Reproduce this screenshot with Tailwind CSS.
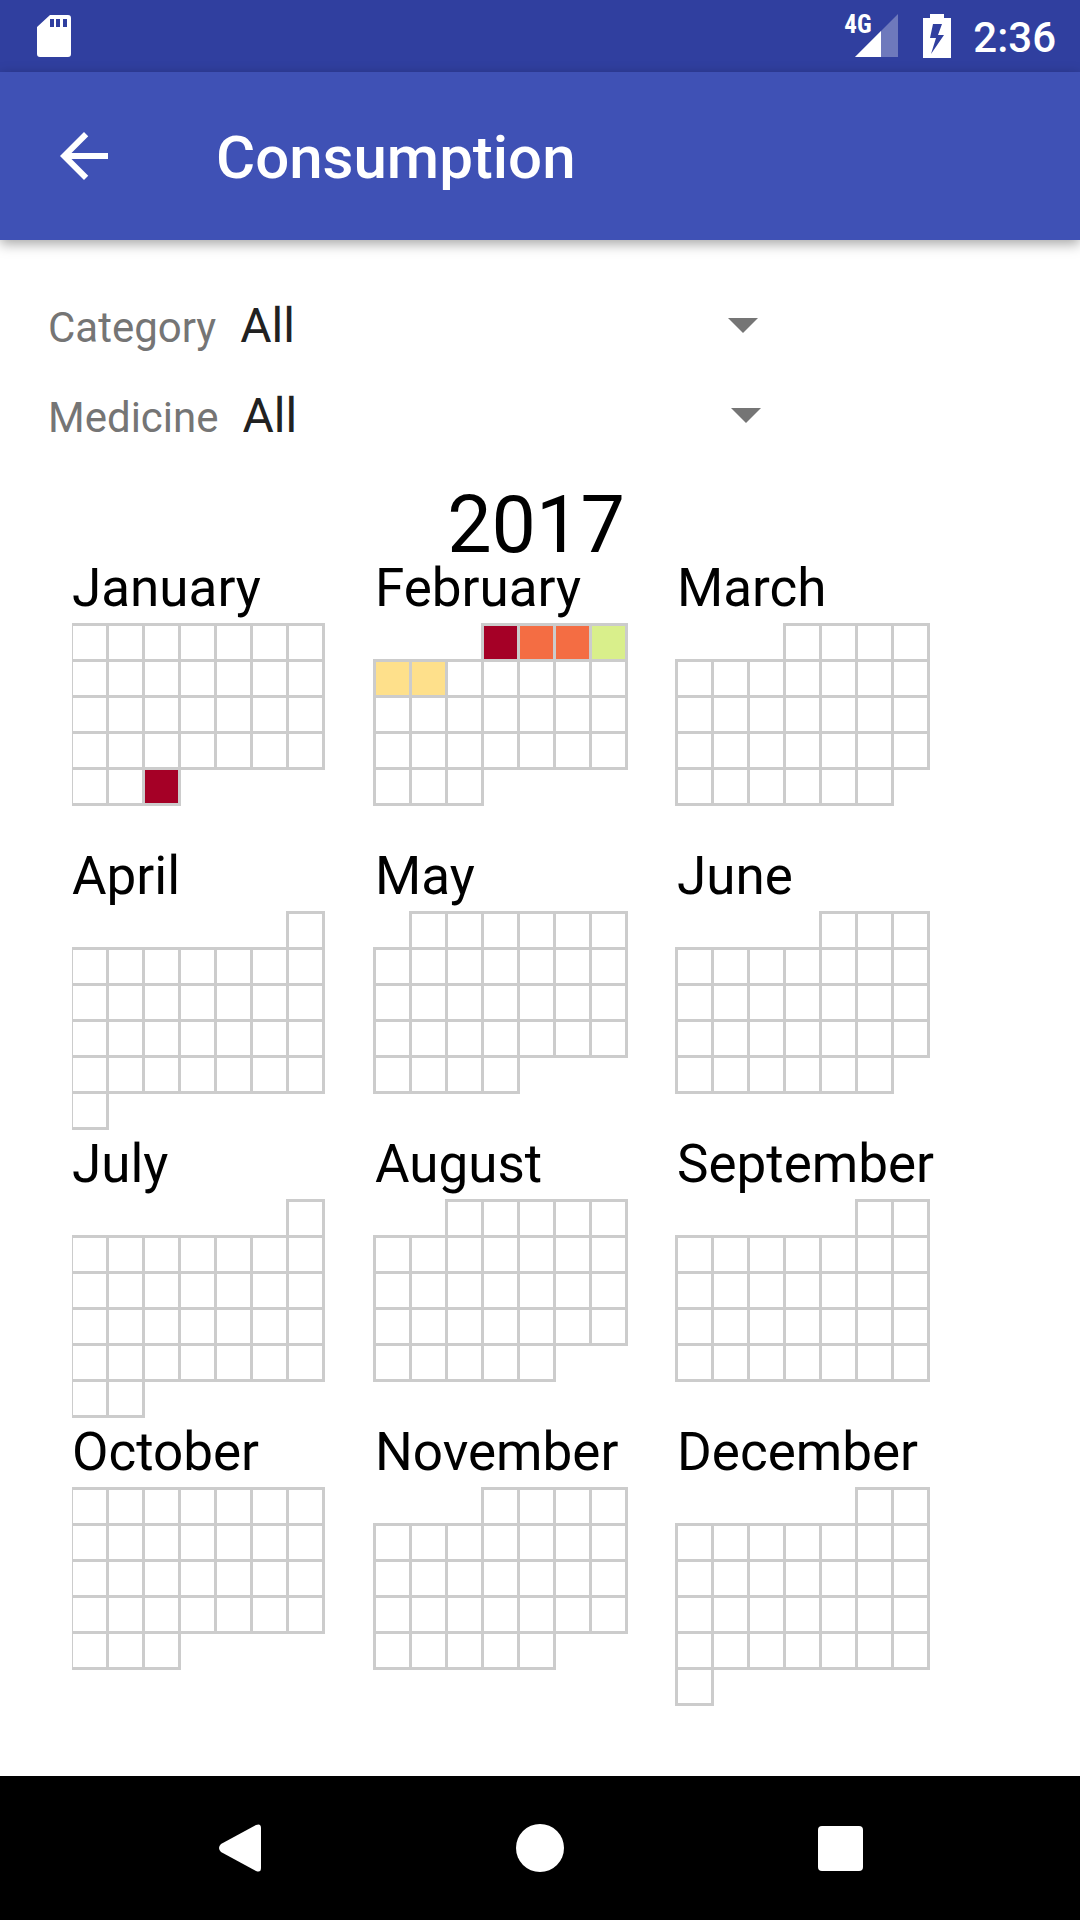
<!DOCTYPE html>
<html lang="en">
<head>
<meta charset="utf-8">
<meta name="viewport" content="width=device-width, initial-scale=1">
<title>Consumption</title>
<script src="https://cdn.jsdelivr.net/npm/@tailwindcss/browser@4"></script>
</head>
<body class="flex min-h-screen flex-col bg-white font-['Roboto',sans-serif] text-black">

<div class="flex h-[72px] items-center justify-between bg-[#303f9f] pr-6 pl-9 text-white">
  <svg class="h-[44px] w-9" viewBox="0 0 36 44" fill="currentColor" role="img" aria-label="SD card">
    <path fill-rule="evenodd" d="M14 1h18a3 3 0 0 1 3 3v36a3 3 0 0 1-3 3H4a3 3 0 0 1-3-3V13zM14 5v8h4V5zM20 5v8h4V5zM27 5v8h4V5z"/>
  </svg>
  <div class="flex items-center">
    <div class="relative h-[44px] w-[54px]">
      <svg class="h-[44px] w-[54px]" viewBox="0 0 54 44" fill="currentColor" aria-hidden="true">
        <path fill-opacity=".3" d="M54 0v43H11z"/>
        <path d="M37 17v26H11z"/>
      </svg>
      <span class="absolute top-0 left-0 font-['Roboto_Condensed','Liberation_Sans_Narrow','Roboto',sans-serif] text-[25px] leading-[22px] font-bold">4G</span>
    </div>
    <svg class="ml-[25px] h-[44px] w-7" viewBox="0 0 28 44" fill="currentColor" role="img" aria-label="Battery charging">
      <path fill-rule="evenodd" d="M7 0h14v4h7v40H0V4h7zM10 10L7 24h6L8 40 21 21h-6l4-11z"/>
    </svg>
    <time class="ml-[22px] pt-1 text-[42px] leading-[48px] font-medium">2:36</time>
  </div>
</div>

<header class="relative flex h-[168px] items-center bg-[#3f51b5] text-white shadow-[0_4px_12px_rgba(0,0,0,0.35)]">
  <button type="button" aria-label="Back" class="flex h-[168px] w-[168px] items-center justify-center">
    <svg class="h-[72px] w-[72px]" viewBox="0 0 24 24" fill="currentColor" aria-hidden="true"><path d="M20 11H7.83l5.59-5.59L12 4l-8 8 8 8 1.41-1.41L7.83 13H20z"/></svg>
  </button>
  <h1 class="ml-12 pt-1 text-[60px] leading-[72px] font-medium">Consumption</h1>
</header>

<main class="flex-1 px-12 pt-10">
  <form>
    <div class="flex h-[90px] items-baseline">
      <label for="category" class="text-[42px] leading-[92px] text-[#757575]">Category</label>
      <div class="relative">
        <select id="category" class="h-[92px] w-[558px] appearance-none bg-transparent pl-6 text-[48px] leading-[92px] text-[#212121]"><option>All</option></select>
        <svg class="pointer-events-none absolute top-[38px] right-4 h-[15px] w-[30px]" viewBox="0 0 30 15" fill="#757575" aria-hidden="true"><path d="M0 0h30L15 15z"/></svg>
      </div>
    </div>
    <div class="flex h-[90px] items-baseline">
      <label for="medicine" class="text-[42px] leading-[92px] text-[#757575]">Medicine</label>
      <div class="relative">
        <select id="medicine" class="h-[92px] w-[558px] appearance-none bg-transparent pl-6 text-[48px] leading-[92px] text-[#212121]"><option>All</option></select>
        <svg class="pointer-events-none absolute top-[38px] right-4 h-[15px] w-[30px]" viewBox="0 0 30 15" fill="#757575" aria-hidden="true"><path d="M0 0h30L15 15z"/></svg>
      </div>
    </div>
  </form>

  <section class="mt-[34px] pl-6">
    <h2 class="w-[928px] text-center text-[79px] leading-[62px]">2017</h2>
    <div id="months" class="grid grid-cols-[303px_302px_302px] overflow-hidden"></div>
  </section>
</main>

<nav aria-label="System" class="grid h-[144px] grid-cols-3 bg-black px-[90px] text-white">
  <button type="button" aria-label="Back" class="flex items-center justify-center"><svg class="h-12 w-[42px]" viewBox="0 0 42 48" fill="currentColor" aria-hidden="true"><path d="M2 20 37 1Q42-1 42 4V44Q42 49 37 47L2 28Q-2 24 2 20z"/></svg></button>
  <button type="button" aria-label="Home" class="flex items-center justify-center"><span class="h-12 w-12 rounded-full bg-white"></span></button>
  <button type="button" aria-label="Overview" class="flex items-center justify-center"><span class="h-[45px] w-[45px] rounded bg-white"></span></button>
</nav>

<script>
  const year = 2017;
  const names = ['January', 'February', 'March', 'April', 'May', 'June', 'July', 'August', 'September', 'October', 'November', 'December'];
  // Fill colour for each day with recorded consumption, keyed by month-day.
  const fills = {
    '1-31': 'bg-[#a50026]', '2-1': 'bg-[#a50026]', '2-2': 'bg-[#f46d43]', '2-3': 'bg-[#f46d43]',
    '2-4': 'bg-[#d9ef8b]', '2-5': 'bg-[#fee08b]', '2-6': 'bg-[#fee08b]'
  };
  document.getElementById('months').innerHTML = names.map((name, m) => {
    const first = new Date(year, m, 1).getDay();
    const days = new Date(year, m + 1, 0).getDate();
    let rows = '';
    for (let start = 1 - first; start <= days; start += 7) {
      rows += '<tr>';
      for (let d = start; d < start + 7; d++) {
        rows += d < 1 || d > days
          ? '<td class="h-9 w-9 p-0"></td>'
          : `<td class="h-9 w-9 border-3 border-[#ccc] p-0 ${fills[(m + 1) + '-' + d] || ''}"></td>`;
      }
      rows += '</tr>';
    }
    return `<section class="h-[288px]"><h3 class="h-[67px] text-[53px] leading-[64px]">${name}</h3><table class="-ml-[2px] w-[255px] table-fixed border-collapse" aria-label="${name} ${year}"><tbody>${rows}</tbody></table></section>`;
  }).join('');
</script>
</body>
</html>
